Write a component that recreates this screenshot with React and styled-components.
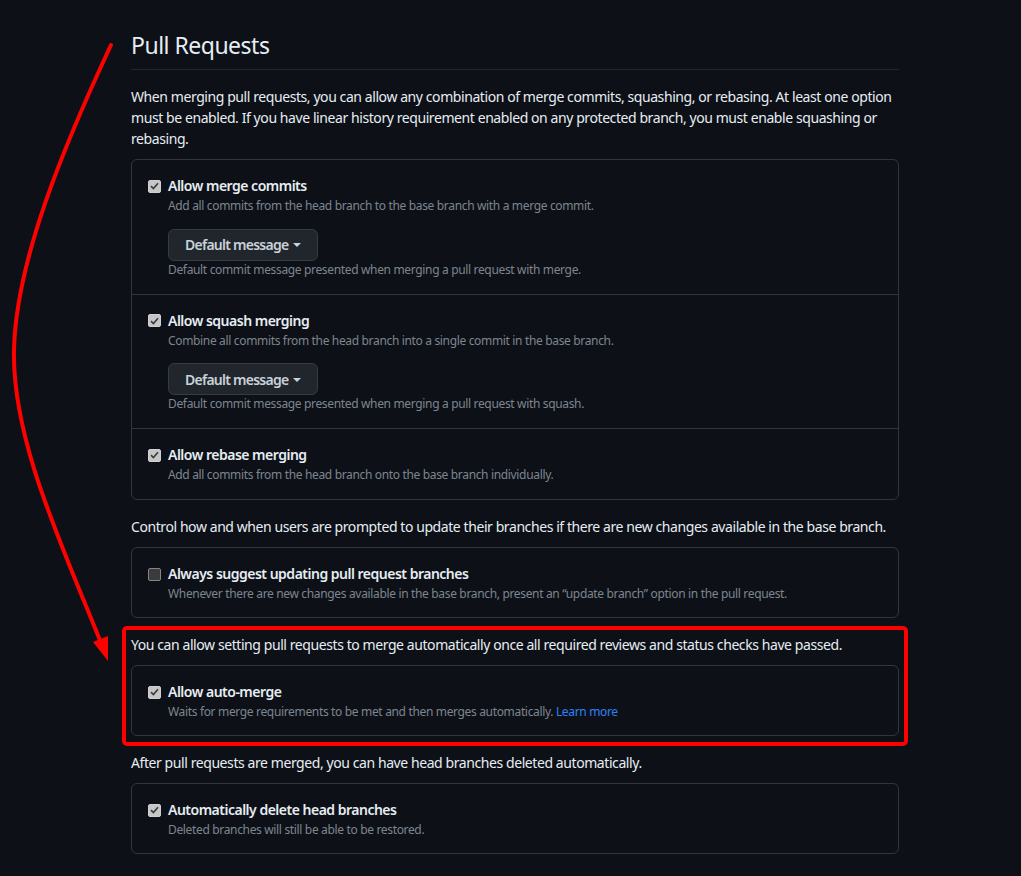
import React from "react";
import styled, { createGlobalStyle } from "styled-components";

const Global = createGlobalStyle`
  html, body { margin: 0; padding: 0; background: #0d1117; }
  body {
    font-family: "Noto Sans", "Liberation Sans", sans-serif;
    color: #e6edf3;
    font-size: 14px;
  }
`;

const Page = styled.div`
  position: relative;
  min-height: 876px;
  padding: 29px 0 40px 131px;
  box-sizing: border-box;
  background: #0d1117;
`;

const Content = styled.div`
  width: 768px;
`;

const Subhead = styled.div`
  padding-bottom: 8px;
  border-bottom: 1px solid #21262d;
`;

const Heading = styled.h2`
  margin: 0;
  font-size: 23px;
  line-height: 32px;
  font-weight: 400;
  letter-spacing: -0.5px;
  color: #e6edf3;
`;

const Section = styled.div`
  position: relative;
  margin-top: 16px;
  ${(p) =>
    p.$highlight &&
    `
    &::after {
      content: "";
      position: absolute;
      top: -8px;
      left: -9px;
      right: -9px;
      bottom: -10px;
      border: 4px solid #ff0000;
      border-radius: 5px;
      pointer-events: none;
    }
  `}
`;

const Intro = styled.p`
  margin: 0 0 10px;
  font-size: 14px;
  line-height: 21px;
  letter-spacing: -0.42px;
  color: #e6edf3;
`;

const Box = styled.div`
  border: 1px solid #30363d;
  border-radius: 6px;
`;

const Row = styled.div`
  padding: 16px 16px 15px;
  & + & {
    border-top: 1px solid #30363d;
  }
  &:only-child {
    padding-bottom: 14px;
  }
`;

const Label = styled.label`
  display: flex;
  align-items: center;
  gap: 7px;
  height: 20px;
  margin-bottom: 1px;
`;

const Check = styled.span`
  width: 13px;
  height: 13px;
  box-sizing: border-box;
  border-radius: 2px;
  flex: none;
  display: flex;
  align-items: center;
  justify-content: center;
  background: ${(p) => (p.$checked ? "#c6c6c6" : "#3b3b3b")};
  border: 1px solid ${(p) => (p.$checked ? "#d0d0d0" : "#858585")};
`;

const Title = styled.span`
  font-weight: 600;
  font-size: 14px;
  line-height: 20px;
  letter-spacing: -0.5px;
  color: #e6edf3;
`;

const Note = styled.div`
  padding-left: 20px;
  font-size: 12px;
  line-height: 18px;
  letter-spacing: -0.34px;
  color: #7d8590;
`;

const Link = styled.a`
  color: #2f81f7;
  text-decoration: none;
`;

const Menu = styled.div`
  padding-left: 20px;
  margin-top: 13.5px;
`;

const Button = styled.button`
  display: inline-flex;
  align-items: center;
  gap: 5px;
  height: 32px;
  padding: 0 16px;
  box-sizing: border-box;
  background: #21262d;
  border: 1px solid #363b42;
  border-radius: 6px;
  color: #c9d1d9;
  font-family: inherit;
  font-size: 14px;
  font-weight: 600;
  letter-spacing: -0.75px;
`;

const Caret = styled.span`
  width: 0;
  height: 0;
  border-left: 4px solid transparent;
  border-right: 4px solid transparent;
  border-top: 4px solid #c9d1d9;
  margin-top: 1px;
`;

const MenuNote = styled(Note)`
  padding-left: 0;
`;

const Overlay = styled.svg`
  position: absolute;
  left: 0;
  top: 0;
  pointer-events: none;
`;

const CheckMark = () => (
  <svg width="9" height="8" viewBox="0 0 9 8">
    <path d="M1 4.2 L3.4 6.5 L8 1.3" fill="none" stroke="#3a3a3a" strokeWidth="1.6" />
  </svg>
);

const Option = ({ checked, title, desc, children }) => (
  <Row>
    <Label>
      <Check $checked={checked}>{checked && <CheckMark />}</Check>
      <Title>{title}</Title>
    </Label>
    <Note>{desc}</Note>
    {children}
  </Row>
);

const MessageMenu = ({ kind }) => (
  <Menu>
    <Button>
      Default message <Caret />
    </Button>
    <MenuNote>
      Default commit message presented when merging a pull request with {kind}.
    </MenuNote>
  </Menu>
);

export default function App() {
  return (
    <>
      <Global />
      <Page>
        <Content>
          <Subhead>
            <Heading>Pull Requests</Heading>
          </Subhead>

          <Section>
            <Intro>
              When merging pull requests, you can allow any combination of merge commits,
              squashing, or rebasing. At least one option must be enabled. If you have linear
              history requirement enabled on any protected branch, you must enable squashing or
              rebasing.
            </Intro>
            <Box>
              <Option
                checked
                title="Allow merge commits"
                desc="Add all commits from the head branch to the base branch with a merge commit."
              >
                <MessageMenu kind="merge" />
              </Option>
              <Option
                checked
                title="Allow squash merging"
                desc="Combine all commits from the head branch into a single commit in the base branch."
              >
                <MessageMenu kind="squash" />
              </Option>
              <Option
                checked
                title="Allow rebase merging"
                desc="Add all commits from the head branch onto the base branch individually."
              />
            </Box>
          </Section>

          <Section>
            <Intro>
              Control how and when users are prompted to update their branches if there are new
              changes available in the base branch.
            </Intro>
            <Box>
              <Option
                title="Always suggest updating pull request branches"
                desc="Whenever there are new changes available in the base branch, present an “update branch” option in the pull request."
              />
            </Box>
          </Section>

          <Section $highlight>
            <Intro>
              You can allow setting pull requests to merge automatically once all required reviews
              and status checks have passed.
            </Intro>
            <Box>
              <Option
                checked
                title="Allow auto-merge"
                desc={
                  <>
                    Waits for merge requirements to be met and then merges automatically.{" "}
                    <Link href="#">Learn more</Link>
                  </>
                }
              />
            </Box>
          </Section>

          <Section>
            <Intro>After pull requests are merged, you can have head branches deleted automatically.</Intro>
            <Box>
              <Option
                checked
                title="Automatically delete head branches"
                desc="Deleted branches will still be able to be restored."
              />
            </Box>
          </Section>
        </Content>

        <Overlay width="1021" height="876" viewBox="0 0 1021 876">
          <path
            d="M111 45 C62 150 16 262 14 350 C12 440 62 545 101 643"
            fill="none"
            stroke="#ff0000"
            strokeWidth="4"
            strokeLinecap="round"
          />
          <polygon points="93,642 108,636 108,661" fill="#ff0000" />
        </Overlay>
      </Page>
    </>
  );
}
